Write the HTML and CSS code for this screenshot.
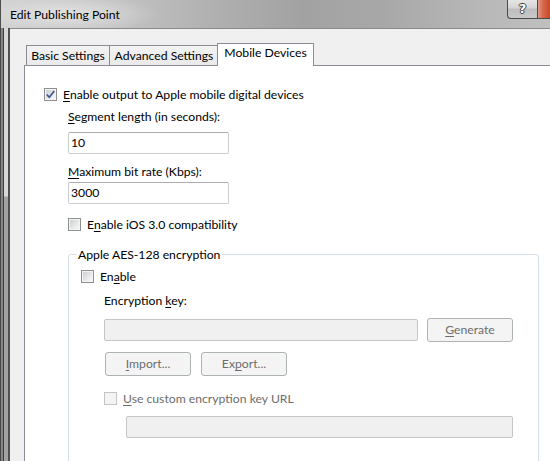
FILE: index.html
```html
<!DOCTYPE html>
<html>
<head>
<meta charset="utf-8">
<link rel="stylesheet" href="styles.css">
</head>
<body>
<div class="window">
  <div class="titlebar">
    <span class="title">Edit Publishing Point</span>
    <div class="caption">
      <div class="cap-btn help"><span class="qmark">?</span></div>
      <div class="cap-btn close"></div>
    </div>
  </div>
  <div class="body-row">
    <div class="frame-left"></div>
    <div class="client">
      <div class="tabs">
        <div class="tab t-basic">Basic Settings</div>
        <div class="tab t-adv">Advanced Settings</div>
        <div class="tab active t-mobile">Mobile Devices</div>
      </div>
      <div class="panel">
        <div class="check-row r1">
          <span class="cb checked"><svg width="11" height="11" viewBox="0 0 11 11"><path d="M1.8 5.6 L4.3 8.3 L9.3 1.9" fill="none" stroke="#3a5796" stroke-width="1.7"/></svg></span>
          <span class="cb-label"><u>E</u>nable output to Apple mobile digital devices</span>
        </div>
        <div class="indent">
          <div class="lbl l-seg"><u>S</u>egment length (in seconds):</div>
          <div class="textbox tb1">10</div>
          <div class="lbl l-max"><u>M</u>aximum bit rate (Kbps):</div>
          <div class="textbox tb2">3000</div>
          <div class="check-row r2">
            <span class="cb"></span>
            <span class="cb-label">E<u>n</u>able iOS 3.0 compatibility</span>
          </div>
          <fieldset class="group">
            <legend>Apple AES-128 encryption</legend>
            <div class="check-row r3">
              <span class="cb"></span>
              <span class="cb-label">En<u>a</u>ble</span>
            </div>
            <div class="sub">
              <div class="lbl l-key">Encryption <u>k</u>ey:</div>
              <div class="key-row">
                <div class="textbox disabled tb3"></div>
                <div class="btn"><u>G</u>enerate</div>
              </div>
              <div class="btn-row">
                <div class="btn b-import"><u>I</u>mport...</div>
                <div class="btn">Ex<u>p</u>ort...</div>
              </div>
              <div class="check-row r4">
                <span class="cb dis"></span>
                <span class="cb-label dis-text"><u>U</u>se custom encryption key URL</span>
              </div>
              <div class="textbox disabled tb4"></div>
            </div>
          </fieldset>
        </div>
      </div>
    </div>
  </div>
</div>
</body>
</html>
```

FILE: styles.css
```css
* { box-sizing: border-box; }
html, body { margin: 0; padding: 0; }
body {
  width: 550px;
  height: 461px;
  overflow: hidden;
  font-family: Lato, "Liberation Sans", sans-serif;
  font-size: 12.2px;
  color: #000;
  background: #a8a8a8;
}
u { text-decoration-thickness: 1px; text-underline-offset: 2px; }

.window {
  display: flex;
  flex-direction: column;
  width: 550px;
  height: 461px;
}

/* ---------- title bar ---------- */
.titlebar {
  flex: none;
  height: 28px;
  display: flex;
  align-items: flex-start;
  overflow: hidden;
  border-left: 1px solid #4d4d4d;
  background:
    radial-gradient(ellipse 90px 18px at 70px 14px, rgba(255,255,255,0.45), rgba(255,255,255,0) 100%),
    linear-gradient(to right, #d2d2d2 0%, #c4c4c4 20%, #afafaf 40%, #a2a2a2 55%, #a8a8a8 70%, #b8b8b8 88%, #c0c0c0 100%);
}
.title {
  padding: 7px 0 0 9px;
  line-height: 15px;
  color: #000;
}
.caption {
  margin-left: auto;
  display: flex;
}
.cap-btn {
  height: 19px;
  border: 1px solid #4a4a4a;
  border-top: none;
}
.help {
  width: 30px;
  border-right: none;
  border-bottom-left-radius: 4px;
  background: linear-gradient(#e6e6e6 0%, #d4d4d4 45%, #bdbdbd 50%, #c8c8c8 100%);
  display: flex;
  justify-content: center;
  align-items: center;
}
.qmark {
  font-family: "DejaVu Sans", sans-serif;
  font-weight: bold;
  font-size: 13px;
  line-height: 14px;
  color: #fff;
  text-shadow: 1px 0 0 #3c3c3c, -1px 0 0 #3c3c3c, 0 1px 0 #3c3c3c, 0 -1px 0 #3c3c3c;
}
.close {
  width: 13px;
  border-right: none;
  background: linear-gradient(to right, #e19a86 0%, #d56a4d 40%, #c9472a 100%);
}

/* ---------- frame + client ---------- */
.body-row {
  flex: 1;
  display: flex;
  min-height: 0;
}
.frame-left {
  flex: none;
  width: 10px;
  background:
    linear-gradient(to right, #474747 0 1px, #858585 1px 3px, #3c3c3c 3px 4px, transparent 4px 8px, #505050 8px 10px),
    linear-gradient(#d8d8d8 0 168px, #a2a2a2 169px 100%);
}
.client {
  flex: 1;
  display: flex;
  flex-direction: column;
  background: #f0f0f0;
  border-top: 1px solid #8a8a8a;
  padding: 14px 0 0 14px;
  min-width: 0;
}

/* ---------- tabs ---------- */
.tabs {
  display: flex;
  align-items: flex-end;
  padding-left: 2px;
  flex: none;
}
.tab {
  height: 20px;
  border: 1px solid #898c95;
  border-bottom: none;
  background: linear-gradient(#f3f3f3, #e9e9e9);
  text-align: center;
  padding-top: 2px;
  line-height: 15px;
  white-space: nowrap;
}
.t-basic { width: 84px; }
.t-adv { width: 110px; margin-left: -1px; }
.tab.active {
  width: 97px;
  height: 23px;
  margin-left: -2px;
  margin-bottom: -1px;
  padding-top: 1px;
  background: #fff;
  position: relative;
  z-index: 1;
}

.panel {
  flex: 1;
  background: #fff;
  border-top: 1px solid #898c95;
  border-left: 1px solid #898c95;
  padding: 22px 0 0 19px;
}

/* ---------- controls ---------- */
.check-row {
  display: flex;
  align-items: center;
  height: 13px;
}
.cb {
  flex: none;
  width: 13px;
  height: 13px;
  border: 1px solid #8e8f8f;
  background: linear-gradient(135deg, #c8cbcf 0%, #e6e7e8 55%, #fbfbfb 100%);
  box-shadow: inset 0 0 0 1px #f4f4f4;
  display: flex;
  align-items: center;
  justify-content: center;
}
.cb.dis {
  border-color: #c4c4c4;
  background: #f4f4f4;
}
.cb-label {
  margin-left: 6px;
  line-height: 13px;
  white-space: nowrap;
}
.dis-text { color: #6d6d6d; }

.indent {
  margin-left: 24px;
}
.lbl {
  line-height: 15px;
  white-space: nowrap;
}
.l-seg { margin-top: 8px; }
.l-max { margin-top: 10px; }

.textbox {
  height: 22px;
  border: 1px solid #c9cdd4;
  border-top-color: #abadb3;
  border-radius: 2px;
  background: #fff;
  padding-left: 2px;
  line-height: 20px;
}
.tb1 { width: 161px; margin-top: 8px; }
.tb2 { width: 161px; margin-top: 3px; }
.textbox.disabled {
  background: #f0f0f0;
  border-color: #c5c5c5;
}

.r2 { margin-top: 14px; }

.group {
  width: 471px;
  margin: 16px 0 0 0;
  padding: 8px 0 40px 6px;
  border: 1px solid #d5dfe5;
  border-radius: 3px;
  min-width: 0;
}
.group legend {
  padding: 0 2px;
  margin-left: 1px;
  line-height: 15px;
}
.r3 { margin-left: 6px; }
.sub { margin-left: 29px; }
.l-key { margin-top: 10px; }
.key-row {
  display: flex;
  align-items: center;
  gap: 9px;
  margin-top: 10px;
}
.tb3 { width: 314px; }
.btn {
  width: 86px;
  height: 24px;
  border: 1px solid #adb2b5;
  border-radius: 3px;
  background: #f4f4f4;
  color: #6d6d6d;
  text-align: center;
  line-height: 22px;
}
.btn-row {
  display: flex;
  gap: 10px;
  margin-top: 10px;
}
.b-import { margin-left: 1px; }
.r4 { margin-top: 16px; }
.tb4 { width: 387px; margin: 11px 0 0 22px; }
```
